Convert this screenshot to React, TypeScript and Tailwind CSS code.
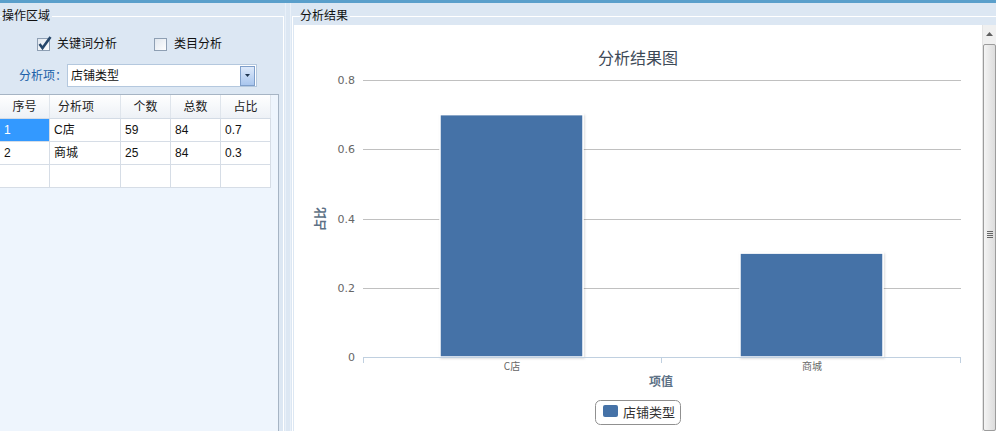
import React from 'react'

// rows of the analysis grid
const rows = [
  { id: '1', item: 'C店', count: '59', total: '84', ratio: '0.7' },
  { id: '2', item: '商城', count: '25', total: '84', ratio: '0.3' },
  { id: '', item: '', count: '', total: '', ratio: '' },
]

const cols = ['w-[50px]', 'w-[71px]', 'w-[50px]', 'w-[50px]', 'w-[50px]']

function CheckBox({ checked }: { checked?: boolean }) {
  return (
    <svg width="16" height="16" viewBox="0 0 16 16" className="shrink-0">
      <defs>
        <linearGradient id={checked ? 'cbA' : 'cbB'} x1="0" y1="0" x2="1" y2="1">
          <stop offset="0" stopColor="#dfe6ee" />
          <stop offset="1" stopColor="#ffffff" />
        </linearGradient>
      </defs>
      <rect x="0.5" y="2.5" width="12" height="12" fill={`url(#${checked ? 'cbA' : 'cbB'})`} stroke="#8e9fb3" />
      {checked && <path d="M2.5 8 L5.5 12 L13.5 1" fill="none" stroke="#26476b" strokeWidth="2.6" />}
    </svg>
  )
}

function Chart() {
  const grid = [
    { y: 55, label: '0.8' },
    { y: 124, label: '0.6' },
    { y: 194, label: '0.4' },
    { y: 263, label: '0.2' },
    { y: 332, label: '0' },
  ]
  const bars = [
    { x: 146, w: 143, v: 0.7, label: 'C店', cx: 218 },
    { x: 446, w: 143, v: 0.3, label: '商城', cx: 518 },
  ]
  const scale = (332 - 55) / 0.8
  return (
    <svg width="688" height="406" className="block" style={{ fontFamily: "'DejaVu Sans','Noto Sans CJK SC',sans-serif" }}>
      <defs>
        <filter id="shadow" x="-10%" y="-10%" width="120%" height="120%">
          <feDropShadow dx="1" dy="1" stdDeviation="1" floodColor="#000" floodOpacity="0.15" />
        </filter>
      </defs>
      <text x="344" y="39" textAnchor="middle" fontSize="16" fill="#3e4a57" fontFamily="'Noto Sans CJK SC',sans-serif">
        分析结果图
      </text>
      {grid.slice(0, 4).map((g) => (
        <line key={g.y} x1="69" x2="667" y1={g.y + 0.5} y2={g.y + 0.5} stroke="#c0c0c0" />
      ))}
      {grid.map((g) => (
        <text key={g.label} x="61" y={g.y + 4} textAnchor="end" fontSize="11" fill="#666">
          {g.label}
        </text>
      ))}
      {bars.map((b) => (
        <rect
          key={b.label}
          x={b.x}
          y={332 - b.v * scale}
          width={b.w}
          height={b.v * scale}
          fill="#4572a7"
          stroke="#ffffff"
          strokeWidth="1.5"
          filter="url(#shadow)"
        />
      ))}
      <line x1="69" x2="667" y1="332.5" y2="332.5" stroke="#c0d0e0" />
      {[69, 367, 666].map((x) => (
        <line key={x} x1={x + 0.5} x2={x + 0.5} y1="332" y2="338" stroke="#c0d0e0" />
      ))}
      {bars.map((b) => (
        <text key={b.label} x={b.cx} y="345" textAnchor="middle" fontSize="10" fill="#666" fontFamily="'Noto Sans CJK SC',sans-serif">
          {b.label}
        </text>
      ))}
      <text x="367" y="361" textAnchor="middle" fontSize="12" fontWeight="bold" fill="#5d7186" fontFamily="'Noto Sans CJK SC',sans-serif">
        项值
      </text>
      <text
        x="31"
        y="194"
        textAnchor="middle"
        fontSize="12"
        fontWeight="bold"
        fill="#5d7186"
        transform="rotate(-90 31 194)"
        fontFamily="'Noto Sans CJK SC',sans-serif"
      >
        占比
      </text>
      <rect x="301.5" y="375.5" width="85" height="24" rx="5" fill="#fff" stroke="#909090" />
      <rect x="309" y="380" width="15" height="12" rx="2" fill="#4572a7" />
      <text x="329" y="392" fontSize="13" fill="#333" fontFamily="'Noto Sans CJK SC',sans-serif">
        店铺类型
      </text>
    </svg>
  )
}

function ScrollBar() {
  return (
    <div className="w-[14px] flex flex-col bg-[#f0f0f0] border-l border-[#e4e4e4]">
      <div className="h-[18px] flex items-center justify-center">
        <svg width="7" height="4" viewBox="0 0 7 4">
          <path d="M0 4 L3.5 0 L7 4 Z" fill="#606060" />
        </svg>
      </div>
      <div className="flex-1 mt-[1px] rounded-[2px] border border-[#9c9c9c] bg-gradient-to-r from-[#f4f4f4] to-[#dcdcdc] flex flex-col items-center pt-[186px]">
        <div className="flex flex-col gap-[1px]">
          <div className="w-[6px] h-px bg-[#666]" />
          <div className="w-[6px] h-px bg-[#666]" />
          <div className="w-[6px] h-px bg-[#666]" />
          <div className="w-[6px] h-px bg-[#666]" />
        </div>
      </div>
    </div>
  )
}

export default function App() {
  return (
    <div className="w-[996px] h-[431px] overflow-hidden flex flex-col bg-[#dce7f3] text-[12px] text-[#111] font-['Liberation_Sans','Noto_Sans_CJK_SC',sans-serif]">
      <div className="h-[3px] bg-[#5a9fcb] shrink-0" />
      <div className="flex flex-1 min-h-0">
        {/* left: operation area */}
        <fieldset className="w-[284px] mt-[6px] border-t border-r border-white flex flex-col min-h-0">
          <legend className="ml-[2px] pr-[2px] leading-[14px] text-[12px]">操作区域</legend>
          <div className="flex items-center h-[16px] mt-[13px]">
            <div className="flex items-center ml-[37px] gap-[4px]">
              <CheckBox checked />
              <span className="leading-[16px]">关键词分析</span>
            </div>
            <div className="flex items-center ml-[37px] gap-[4px]">
              <CheckBox />
              <span className="leading-[16px]">类目分析</span>
            </div>
          </div>
          <div className="flex items-center mt-[12px] h-[23px]">
            <span className="ml-[19px] w-[48px] text-[#2060a8]">分析项：</span>
            <div className="w-[190px] h-[23px] bg-white border border-[#b4c8de] flex items-center justify-between pl-[3px] pr-[1px]">
              <span>店铺类型</span>
              <div className="w-[15px] h-[20px] border border-[#7f9fca] bg-gradient-to-b from-[#dde9fa] to-[#a9c6ee] flex items-center justify-center">
                <svg width="5" height="3" viewBox="0 0 5 3">
                  <path d="M0 0 L5 0 L2.5 3 Z" fill="#1e3550" />
                </svg>
              </div>
            </div>
          </div>
          {/* data grid */}
          <div className="mt-[7px] w-[279px] flex-1 border-t border-r border-[#a6b4c4] bg-[#eef5fd]">
            <div className="flex w-[271px]">
              <div className="flex h-[24px] border-b border-[#d3dbe5] bg-gradient-to-b from-white to-[#edf1f6] w-full text-[#222]">
                {['序号', '分析项', '个数', '总数', '占比'].map((h, i) => (
                  <div
                    key={h}
                    className={`${cols[i]} border-r border-[#dfe5ec] flex items-center ${i === 1 ? 'pl-[8px]' : 'justify-center'}`}
                  >
                    {h}
                  </div>
                ))}
              </div>
            </div>
            <div className="w-[271px] bg-white">
              {rows.map((r, ri) => (
                <div key={ri} className="flex h-[23px] border-b border-[#d6dde6]">
                  {[r.id, r.item, r.count, r.total, r.ratio].map((c, i) => (
                    <div
                      key={i}
                      className={`${cols[i]} border-r border-[#d6dde6] flex items-center pl-[4px] ${
                        ri === 0 && i === 0 ? 'bg-[#3399ff] text-white' : ''
                      }`}
                    >
                      {c}
                    </div>
                  ))}
                </div>
              ))}
            </div>
          </div>
        </fieldset>

        {/* splitter */}
        <div className="w-[8px] flex">
          <div className="w-px ml-[1px] bg-[#e8f0f9]" />
          <div className="flex-1" />
          <div className="w-px bg-[#eaf1f9]" />
          <div className="w-[1px]" />
        </div>

        {/* right: analysis result */}
        <fieldset className="flex-1 mt-[6px] border-t border-l border-white flex flex-col min-h-0">
          <legend className="ml-[7px] pr-[2px] leading-[14px] text-[12px]">分析结果</legend>
          <div className="flex-1 mt-[2px] ml-[1px] bg-white flex min-h-0">
            <div className="flex-1">
              <Chart />
            </div>
            <ScrollBar />
          </div>
        </fieldset>
      </div>
    </div>
  )
}
